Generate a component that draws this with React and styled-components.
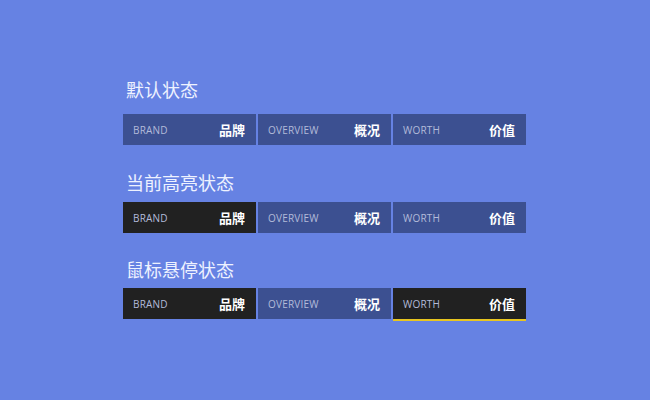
import styled, { createGlobalStyle } from "styled-components";

const GlobalStyle = createGlobalStyle`
    html, body {
        margin: 0;
        padding: 0;
        background-color: #6682e3;
        font-family: "Open Sans", "Noto Sans CJK SC", sans-serif;
    }
`;

const sections = [
    { title: "默认状态", active: -1, hover: -1, top: 80, gap: 14 },
    { title: "当前高亮状态", active: 0, hover: -1, top: 28, gap: 9 },
    { title: "鼠标悬停状态", active: 0, hover: 2, top: 27, gap: 8 },
];

const items = [
    { en: "BRAND", cn: "品牌" },
    { en: "OVERVIEW", cn: "概况" },
    { en: "WORTH", cn: "价值" },
];

const App = () => {
  return (
    <Page>
        <GlobalStyle />
        {sections.map((s) => (
            <Section key={s.title} top={s.top}>
                <Title gap={s.gap}>{s.title}</Title>
                <Bar>
                    {items.map((it, i) => (
                        <Item key={it.en} dark={i === s.active || i === s.hover} hover={i === s.hover}>
                            <En>{it.en}</En>
                            <Cn>{it.cn}</Cn>
                        </Item>
                    ))}
                </Bar>
            </Section>
        ))}
    </Page>
  )
}

const Page = styled.div`
    width: 650px;
    height: 400px;
    box-sizing: border-box;
    padding-left: 123px;
`;

const Section = styled.div`
    padding-top: ${props => props.top}px;
`;

const Title = styled.div`
    font-size: 18px;
    line-height: 20px;
    color: #eef2ff;
    padding-left: 3px;
    margin-bottom: ${props => props.gap}px;
`;

const Bar = styled.div`
    display: flex;
    gap: 2px;
    width: 403px;
`;

const Item = styled.div`
    width: 133px;
    display: flex;
    align-items: center;
    justify-content: space-between;
    padding: 0 10px;
    box-sizing: border-box;
    background-color: ${props => props.dark ? "#212121" : "#3c5091"};
    border-bottom: ${props => props.hover ? "2px solid #e8c520" : "none"};
    height: ${props => props.hover ? "33px" : "31px"};
    cursor: pointer;
`;

const En = styled.span`
    font-size: 10px;
    color: #b3bbd9;
    letter-spacing: 0.2px;
`;

const Cn = styled.span`
    font-size: 13px;
    font-weight: bold;
    color: #ffffff;
    margin-right: 1px;
`;

export default App
